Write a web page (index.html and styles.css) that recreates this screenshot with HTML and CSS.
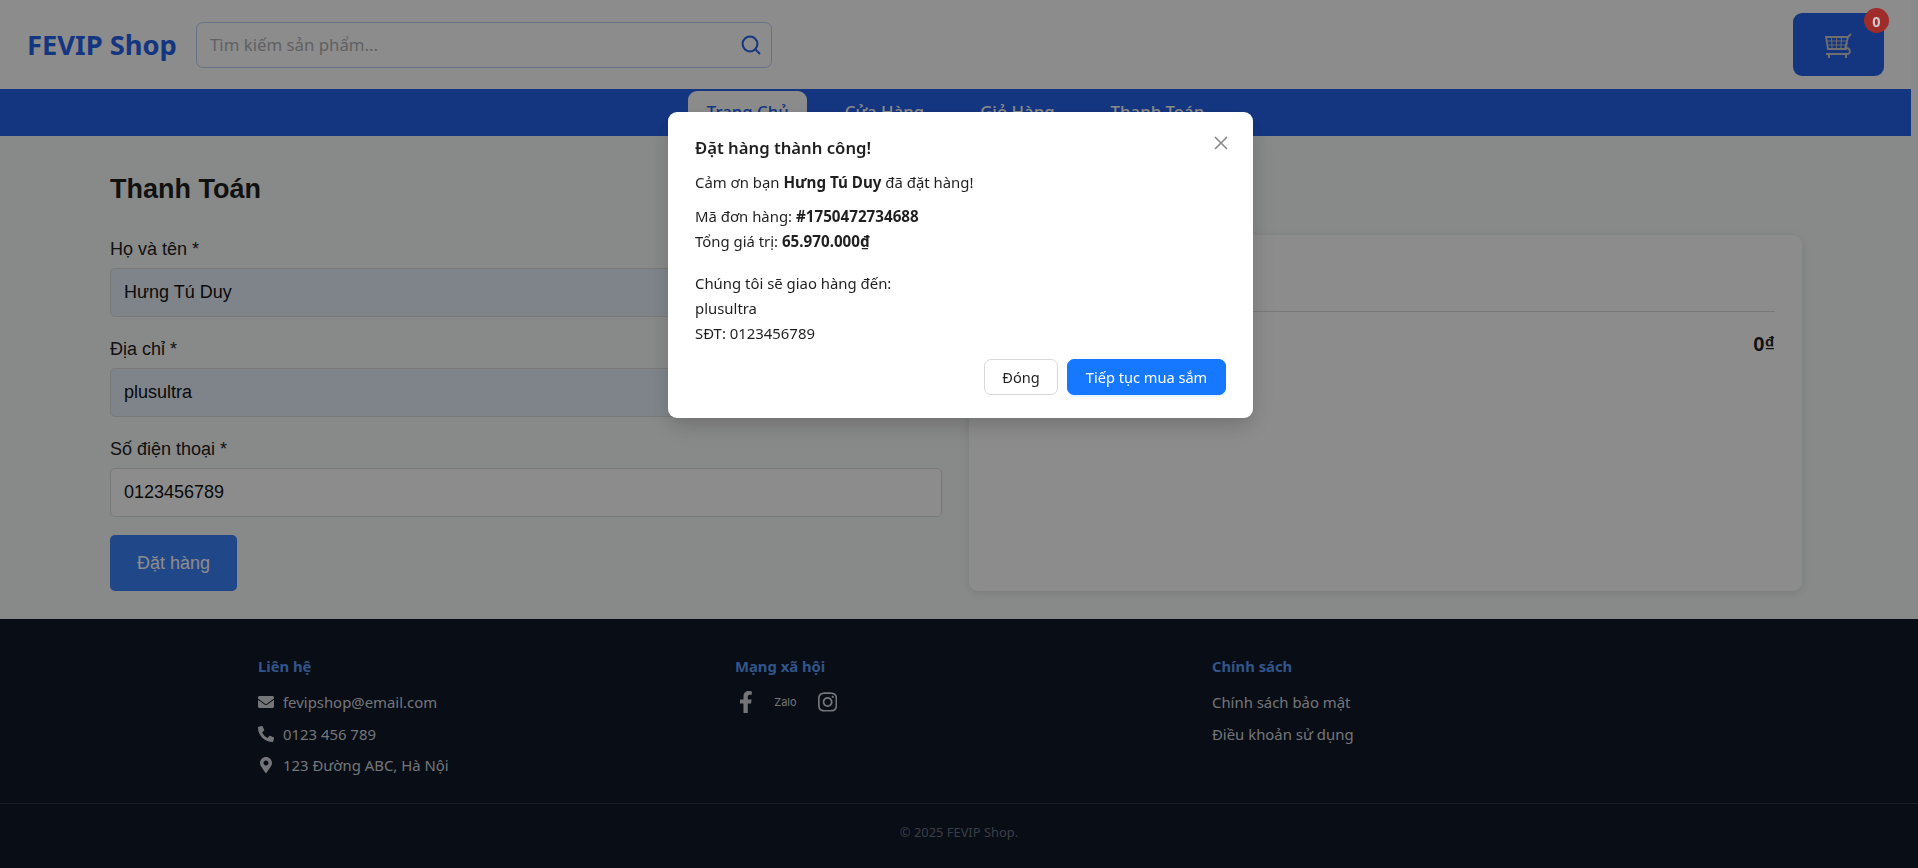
FILE: index.html
```html
<!DOCTYPE html>
<html lang="vi">
  <head>
    <meta charset="UTF-8" />
    <meta name="viewport" content="width=device-width, initial-scale=1.0" />
    <title>FEVIP Shop</title>
    <link rel="stylesheet" href="styles.css">
  </head>
  <body>
    <div class="page">
      <header class="top-bar">
        <div class="logo">FEVIP Shop</div>
        <div class="search-box">
          <input class="search-input" type="text" placeholder="Tìm kiếm sản phẩm...">
          <svg class="search-icon" viewBox="0 0 20 20" width="20" height="20"><circle cx="9" cy="9" r="7.4"></circle><path d="M14.4 14.4 19 19"></path></svg>
        </div>
        <div class="cart-btn">
          <svg class="cart-icon" viewBox="0 0 28 27" width="28" height="27">
            <path class="cart-frame" d="M1 4h22l-3 12H3zM23 4l3-3M22 9l-1.5 8M21 15c5 0 5 6 1 6H1"></path>
            <path class="cart-grid" d="M1.8 8h20M2.4 12h18.8M6.5 4l.6 12M11.5 4v12M16.5 4l-.6 12"></path>
            <path class="cart-wheels" d="M4 21v4M21 21v4"></path>
          </svg>
          <span class="cart-badge">0</span>
        </div>
      </header>

      <nav class="nav-bar">
        <a class="nav-tab active">Trang Chủ</a>
        <a class="nav-tab">Cửa Hàng</a>
        <a class="nav-tab">Giỏ Hàng</a>
        <a class="nav-tab">Thanh Toán</a>
      </nav>

      <main class="checkout">
        <h1 class="checkout-title">Thanh Toán</h1>
        <div class="checkout-grid">
          <form class="checkout-form">
            <div class="form-group">
              <label class="form-label">Họ và tên *</label>
              <input class="form-input filled" type="text" value="Hưng Tú Duy">
            </div>
            <div class="form-group">
              <label class="form-label">Địa chỉ *</label>
              <input class="form-input filled" type="text" value="plusultra">
            </div>
            <div class="form-group">
              <label class="form-label">Số điện thoại *</label>
              <input class="form-input" type="text" value="0123456789">
            </div>
            <button class="order-btn" type="button">Đặt hàng</button>
          </form>
          <section class="summary-card">
            <div class="summary-head"></div>
            <div class="summary-total">0₫</div>
          </section>
        </div>
      </main>

      <footer class="footer">
        <div class="footer-grid">
          <div class="footer-col">
            <h4 class="footer-title">Liên hệ</h4>
            <div class="footer-row">
              <svg class="footer-icon" viewBox="0 0 512 512"><path d="M502.3 190.8c3.9-3.1 9.7-.2 9.7 4.7V400c0 26.5-21.5 48-48 48H48c-26.5 0-48-21.5-48-48V195.6c0-5 5.7-7.8 9.7-4.7 22.4 17.4 52.1 39.5 154.1 113.6 21.1 15.4 56.7 47.8 92.2 47.6 35.7.3 72-32.8 92.3-47.6 102-74.1 131.6-96.3 154-113.7zM256 320c23.2.4 56.6-29.2 73.4-41.4 132.7-96.3 142.8-104.7 173.4-128.7 5.8-4.5 9.2-11.5 9.2-18.9v-19c0-26.5-21.5-48-48-48H48C21.5 64 0 85.5 0 112v19c0 7.4 3.4 14.3 9.2 18.9 30.6 23.9 40.7 32.4 173.4 128.7 16.8 12.2 50.2 41.8 73.4 41.4z"></path></svg>
              <span>fevipshop@email.com</span>
            </div>
            <div class="footer-row">
              <svg class="footer-icon" viewBox="0 0 512 512"><path d="M497.39 361.8l-112-48a24 24 0 0 0-28 6.9l-49.6 60.6A370.66 370.66 0 0 1 130.6 204.11l60.6-49.6a23.94 23.94 0 0 0 6.9-28l-48-112A24.16 24.16 0 0 0 122.6.61l-104 24A24 24 0 0 0 0 48c0 256.5 207.9 464 464 464a24 24 0 0 0 23.4-18.6l24-104a24.29 24.29 0 0 0-14.01-27.6z"></path></svg>
              <span>0123 456 789</span>
            </div>
            <div class="footer-row">
              <svg class="footer-icon" viewBox="0 0 384 512"><path d="M172.268 501.67C26.97 291.031 0 268.413 0 192 0 85.961 85.961 0 192 0s192 85.961 192 192c0 76.413-26.97 99.031-172.268 309.67-9.535 13.774-29.93 13.773-39.464 0zM192 272c44.183 0 80-35.817 80-80s-35.817-80-80-80-80 35.817-80 80 35.817 80 80 80z"></path></svg>
              <span>123 Đường ABC, Hà Nội</span>
            </div>
          </div>
          <div class="footer-col">
            <h4 class="footer-title">Mạng xã hội</h4>
            <div class="social-row">
              <svg class="social-icon" viewBox="0 0 320 512"><path d="M279.14 288l14.22-92.66h-88.91v-60.13c0-25.35 12.42-50.06 52.24-50.06h40.42V6.26S260.43 0 225.36 0c-73.22 0-121.08 44.38-121.08 124.72v70.62H22.89V288h81.39v224h100.17V288z"></path></svg>
              <span class="zalo">Zalo</span>
              <svg class="social-icon" viewBox="0 0 448 512"><path d="M224.1 141c-63.6 0-114.9 51.3-114.9 114.9s51.3 114.9 114.9 114.9S339 319.5 339 255.9 287.7 141 224.1 141zm0 189.6c-41.1 0-74.7-33.5-74.7-74.7s33.5-74.7 74.7-74.7 74.7 33.5 74.7 74.7-33.6 74.7-74.7 74.7zm146.4-194.3c0 14.9-12 26.8-26.8 26.8-14.9 0-26.8-12-26.8-26.8s12-26.8 26.8-26.8 26.8 12 26.8 26.8zm76.1 27.2c-1.7-35.9-9.9-67.7-36.2-93.9-26.2-26.2-58-34.4-93.9-36.2-37-2.1-147.9-2.1-184.9 0-35.8 1.7-67.6 9.9-93.9 36.1s-34.4 58-36.2 93.9c-2.1 37-2.1 147.9 0 184.9 1.7 35.9 9.9 67.7 36.2 93.9s58 34.4 93.9 36.2c37 2.1 147.9 2.1 184.9 0 35.9-1.7 67.7-9.9 93.9-36.2 26.2-26.2 34.4-58 36.2-93.9 2.1-37 2.1-147.8 0-184.8zM398.8 388c-7.8 19.6-22.9 34.7-42.6 42.6-29.5 11.7-99.5 9-132.1 9s-102.7 2.6-132.1-9c-19.6-7.8-34.7-22.9-42.6-42.6-11.7-29.5-9-99.5-9-132.1s-2.6-102.7 9-132.1c7.8-19.6 22.9-34.7 42.6-42.6 29.5-11.7 99.5-9 132.1-9s102.7-2.6 132.1 9c19.6 7.8 34.7 22.9 42.6 42.6 11.7 29.5 9 99.5 9 132.1s2.7 102.7-9 132.1z"></path></svg>
            </div>
          </div>
          <div class="footer-col">
            <h4 class="footer-title">Chính sách</h4>
            <div class="footer-row">Chính sách bảo mật</div>
            <div class="footer-row">Điều khoản sử dụng</div>
          </div>
        </div>
        <div class="footer-bottom">© 2025 FEVIP Shop.</div>
      </footer>
    </div>

    <div class="modal-mask"></div>
    <div class="modal">
      <svg class="modal-close" viewBox="0 0 14 14" width="14" height="14"><path d="M1 1l12 12M13 1 1 13"></path></svg>
      <div class="modal-title">Đặt hàng thành công!</div>
      <p class="modal-text">Cảm ơn bạn <strong>Hưng Tú Duy</strong> đã đặt hàng!</p>
      <p class="modal-text">Mã đơn hàng: <strong>#1750472734688</strong><br>Tổng giá trị: <strong class="modal-price">65.970.000₫</strong></p>
      <p class="modal-text modal-address">Chúng tôi sẽ giao hàng đến:<br>plusultra<br>SĐT: 0123456789</p>
      <div class="modal-footer">
        <button class="modal-btn" type="button">Đóng</button>
        <button class="modal-btn primary" type="button">Tiếp tục mua sắm</button>
      </div>
    </div>
  </body>
</html>
```

FILE: styles.css
```css
* {
  box-sizing: border-box;
}

html {
  background-color: #ffffff;
}

body {
  margin: 0;
  font-family: "Noto Sans", sans-serif;
  font-size: 14.9px;
  overflow: hidden;
}

.page {
  width: 1918px;
  height: 868px;
  display: flex;
  flex-direction: column;
  background-color: #f8f9fa;
}

/* header */
.top-bar {
  width: 1911px;
  height: 89px;
  display: flex;
  align-items: center;
  gap: 19px;
  padding: 0 27px 0 27px;
  background-color: #ffffff;
}

.logo {
  width: 150px;
  font-size: 27.3px;
  font-weight: 700;
  color: #2563eb;
  white-space: nowrap;
}

.search-box {
  width: 576px;
  height: 46px;
  position: relative;
}

.search-input {
  width: 100%;
  height: 100%;
  padding: 0 48px 0 13px;
  border: 1px solid #bcd0f5;
  border-radius: 7px;
  background: #ffffff;
  font-family: inherit;
  font-size: 16.8px;
}

.search-input::placeholder {
  color: #b0b0b5;
}

.search-icon {
  position: absolute;
  top: 13px;
  right: 11px;
  fill: none;
  stroke: #2563eb;
  stroke-width: 2;
}

.cart-btn {
  width: 91px;
  height: 63px;
  margin-left: auto;
  position: relative;
  display: flex;
  align-items: center;
  justify-content: center;
  background-color: #2563eb;
  border-radius: 9px;
}

.cart-icon {
  margin-top: 3px;
  fill: none;
  stroke: #cbcbc6;
}

.cart-frame {
  stroke-width: 1.8;
}

.cart-grid {
  stroke-width: 0.9;
}

.cart-wheels {
  stroke-width: 2;
}

.cart-badge {
  position: absolute;
  top: -5px;
  right: -5px;
  z-index: 12;
  width: 25px;
  height: 25px;
  border-radius: 50%;
  display: flex;
  align-items: center;
  justify-content: center;
  background-color: #a02b2b;
  color: #d0c8c8;
  font-size: 14.5px;
  font-weight: 700;
}

/* nav */
.nav-bar {
  width: 1911px;
  height: 47px;
  display: flex;
  align-items: flex-end;
  justify-content: center;
  gap: 19px;
  background-color: #2563eb;
}

.nav-tab {
  height: 45px;
  padding: 0 18.5px 4px;
  display: flex;
  align-items: center;
  border-radius: 9px 9px 0 0;
  color: #ffffff;
  font-size: 16.8px;
  font-weight: 500;
}

.nav-tab.active {
  background-color: #ffffff;
  color: #2563eb;
}

/* checkout */
.checkout {
  height: 483px;
  padding: 35px 116px 28px 110px;
  font-family: "Liberation Sans", sans-serif;
}

.checkout-title {
  margin: 0 0 28px;
  font-size: 27px;
  line-height: 36px;
  font-weight: 700;
  color: #1f1f1f;
}

.checkout-grid {
  display: grid;
  grid-template-columns: 832px 833px;
  gap: 27px;
}

.form-group {
  margin-bottom: 18px;
}

.form-label {
  display: block;
  margin-bottom: 4px;
  font-size: 18px;
  line-height: 29px;
  color: #222222;
}

.form-input {
  width: 100%;
  height: 49px;
  padding: 0 13px;
  border: 1px solid #dddddd;
  border-radius: 5px;
  background-color: #ffffff;
  font-family: inherit;
  font-size: 18px;
  color: #111111;
}

.form-input.filled {
  background-color: #e8f0fe;
}

.order-btn {
  width: 127px;
  height: 56px;
  border: none;
  border-radius: 5px;
  background-color: #3b82f6;
  color: #ffffff;
  font-family: inherit;
  font-size: 18px;
}

.summary-card {
  padding: 27px;
  background-color: #ffffff;
  border-radius: 9px;
  box-shadow: 0 2px 8px rgba(0, 0, 0, 0.1);
}

.summary-head {
  height: 50px;
  border-bottom: 1px solid #dddddd;
}

.summary-total {
  padding-top: 21px;
  text-align: right;
  font-size: 20.25px;
  font-weight: 700;
  color: #1f1f1f;
}

/* footer */
.footer {
  flex: 1;
  background-color: #111827;
  color: #d1d5db;
}

.footer-grid {
  margin-left: 258px;
  padding: 35px 0 18.5px;
  display: grid;
  grid-template-columns: repeat(3, 449px);
  gap: 28px;
}

.footer-title {
  margin: 0 0 12px;
  font-size: 14.8px;
  line-height: 24px;
  font-weight: 700;
  color: #5a9cf8;
}

.footer-row {
  height: 24px;
  margin-bottom: 7.5px;
  display: flex;
  align-items: center;
  gap: 9px;
}

.footer-icon {
  width: 16px;
  height: 16px;
  fill: #d1d5db;
}

.social-row {
  height: 24px;
  padding-left: 4px;
  display: flex;
  align-items: center;
  gap: 21.5px;
}

.social-icon {
  height: 22px;
  fill: #d1d5db;
}

.zalo {
  font-family: Inter, sans-serif;
  font-size: 11px;
}

.footer-bottom {
  padding-top: 16px;
  border-top: 1px solid #2d3748;
  text-align: center;
  font-size: 12.9px;
  line-height: 24px;
  color: #6b7280;
}

/* modal */
.modal-mask {
  position: fixed;
  inset: 0;
  z-index: 10;
  background-color: rgba(0, 0, 0, 0.45);
}

.modal {
  position: fixed;
  top: 112px;
  left: 668px;
  z-index: 11;
  width: 585px;
  padding: 22px 27px 23px;
  background-color: #ffffff;
  border-radius: 9px;
  box-shadow: 0 7px 18px rgba(0, 0, 0, 0.12), 0 10px 32px rgba(0, 0, 0, 0.08);
  color: rgba(0, 0, 0, 0.88);
  line-height: 24.75px;
}

.modal-close {
  position: absolute;
  top: 24px;
  right: 25px;
  fill: none;
  stroke: #888888;
  stroke-width: 1.6;
}

.modal-title {
  margin-bottom: 9px;
  font-size: 16.7px;
  line-height: 27px;
  font-weight: 600;
}

.modal-text {
  margin: 0 0 9px;
}

.modal-text strong {
  font-size: 15.2px;
}

.modal-address {
  margin: 18px 0 13px;
}

.modal-footer {
  display: flex;
  justify-content: flex-end;
  gap: 9px;
}

.modal-btn {
  width: 74px;
  height: 36px;
  border: 1px solid #d9d9d9;
  border-radius: 7px;
  background-color: #ffffff;
  font-family: inherit;
  font-size: 14.6px;
  color: rgba(0, 0, 0, 0.88);
}

.modal-btn.primary {
  width: 159px;
  border-color: #1677ff;
  background-color: #1677ff;
  box-shadow: 0 2px 0 rgba(5, 145, 255, 0.1);
  color: #ffffff;
}
```
